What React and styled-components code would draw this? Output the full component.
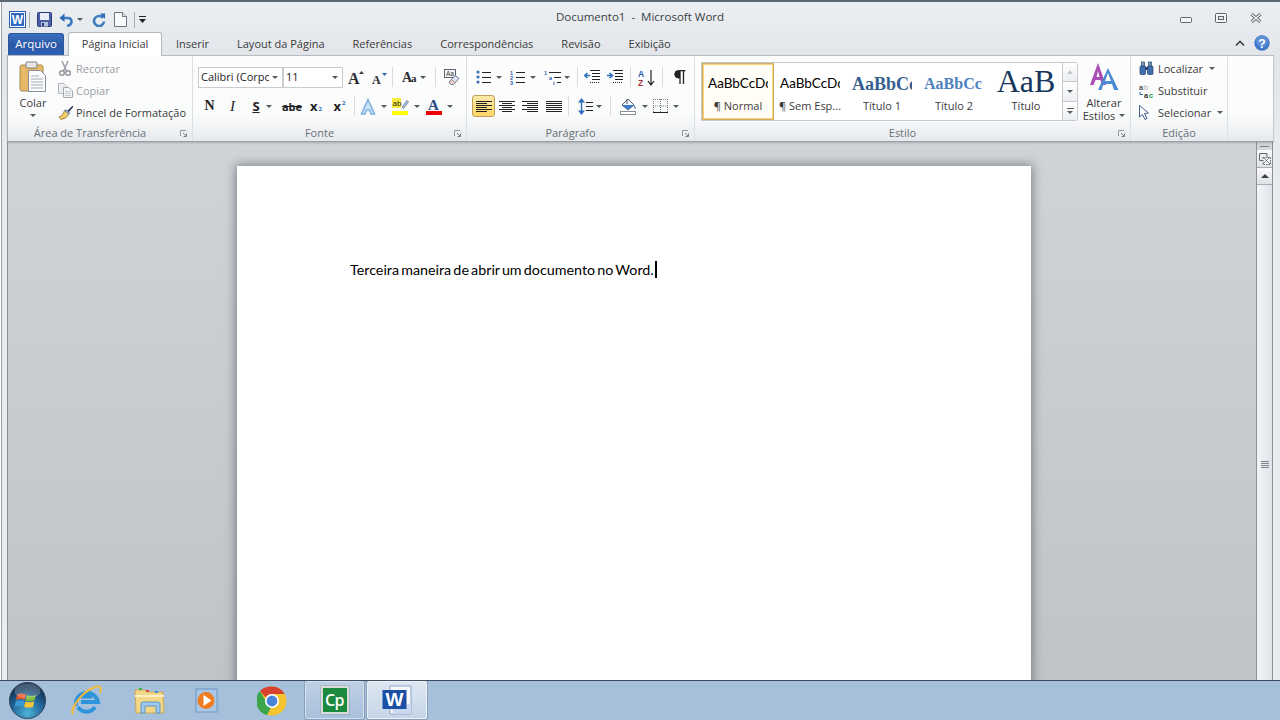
import React from "react";
import styled, { createGlobalStyle } from "styled-components";

const GlobalStyle = createGlobalStyle`
  html, body { margin: 0; padding: 0; height: 100%; overflow: hidden; }
  body { font-family: "Open Sans", "Liberation Sans", sans-serif; font-size: 11px; color: #3b3b3b; }
  #root { height: 720px; }
  svg { display: block; flex: none; }
`;

const Screen = styled.div`
  width: 1280px;
  height: 720px;
  display: flex;
  flex-direction: column;
  overflow: hidden;
  background: #a6bfdb;
`;

const Window = styled.div`
  height: 681px;
  display: flex;
  flex-direction: column;
  flex: none;
  background: linear-gradient(to bottom, #eceff2 0, #e2e5e9 56px, #e8eaed 142px, #eaecef 100%);
  border-top: 2px solid #5d6975;
  border-bottom: 1px solid #3f4c60;
  box-sizing: border-box;
  padding: 0 7px 0 7px;
  box-shadow: inset 1px 0 0 #fff, inset 2px 0 0 #9aa0a6;
`;

const TitleBar = styled.div`
  height: 30px;
  display: grid;
  grid-template-columns: 1fr auto 1fr;
  align-items: center;
`;

const Quick = styled.div`
  display: flex;
  align-items: center;
  padding: 5px 0 0 2px;
`;

const QuickSlot = styled.div`
  width: ${(p) => p.$w}px;
  display: flex;
  flex: none;
  align-items: center;
  justify-content: center;
  gap: 4px;
`;

const QuickRule = styled.div`
  width: 1px;
  height: 16px;
  flex: none;
  background: #a9adb3;
  margin: 0 ${(p) => p.$right}px 0 ${(p) => p.$left}px;
`;

const Title = styled.div`
  font-size: 11.5px;
  color: #3c3f44;
  padding-bottom: 2px;
`;

const Controls = styled.div`
  display: flex;
  align-items: flex-end;
  justify-content: flex-end;
  padding: 2px 11px 0 0;
  gap: 23px;
`;

const TabBar = styled.div`
  height: 23px;
  display: flex;
  align-items: flex-end;
`;

const FileTab = styled.div`
  width: 56px;
  height: 22px;
  margin: 0 0 0 1px;
  padding-bottom: 2px;
  display: flex;
  align-items: center;
  justify-content: center;
  color: #fff;
  background: linear-gradient(to bottom, #3c6fbd, #2a57a8 55%, #2f60b4);
  border: 1px solid #2b579a;
  border-bottom: 0;
  border-radius: 3px 3px 0 0;
  box-sizing: border-box;
  font-size: 11.5px;
`;

const ActiveTab = styled.div`
  width: 94px;
  height: 24px;
  margin: 0 0 -1px 4px;
  padding-bottom: 2px;
  display: flex;
  align-items: center;
  justify-content: center;
  background: #fff;
  border: 1px solid #b5b8bd;
  border-bottom: 0;
  border-radius: 3px 3px 0 0;
  box-sizing: border-box;
  position: relative;
  z-index: 1;
`;

const Tab = styled.div`
  height: 22px;
  display: flex;
  align-items: center;
  box-sizing: border-box;
  padding: 0 14px 2px;
  white-space: nowrap;
  &:first-of-type { margin-left: 1px; }
`;

const TabSpacer = styled.div`
  flex: 1;
`;

const TabEnd = styled.div`
  height: 22px;
  display: flex;
  align-items: center;
  gap: 9px;
  margin-right: 3px;
  padding-bottom: 2px;
  box-sizing: border-box;
`;

const Ribbon = styled.div`
  height: 87px;
  flex: none;
  display: flex;
  box-sizing: border-box;
  border-top: 1px solid #b7babf;
  border-bottom: 1px solid #9a9ea5;
  border-left: 1px solid #a9adb3;
  border-right: 1px solid #c4c7cc;
  margin-right: -1px;
  background: linear-gradient(to bottom, #fdfdfe 0, #fafbfb 60px, #e6e9ed 85px);
  box-shadow: 0 2px 2px -1px rgba(80, 85, 95, 0.3);
  position: relative;
`;

const Group = styled.div`
  width: ${(p) => p.$w}px;
  flex: none;
  display: flex;
  flex-direction: column;
  border-right: 1px solid #dcdfe3;
  box-sizing: border-box;
`;

const GroupBody = styled.div`
  height: 69px;
  display: flex;
  flex-direction: ${(p) => (p.$column ? "column" : "row")};
  padding: ${(p) => p.$pad || "0"};
  box-sizing: border-box;
`;

const GroupFoot = styled.div`
  height: 16px;
  display: flex;
  align-items: center;
`;

const GroupLabel = styled.div`
  flex: 1;
  text-align: center;
  color: #697078;
  white-space: nowrap;
  padding-bottom: 2px;
`;

const Launcher = styled.div`
  width: 20px;
  display: flex;
  justify-content: flex-end;
  padding-right: 5px;
  box-sizing: border-box;
`;

const BigButton = styled.div`
  width: ${(p) => p.$w}px;
  display: flex;
  flex-direction: column;
  align-items: center;
  flex: none;
  line-height: 13px;
`;

const BigIcon = styled.div`
  height: 40px;
  padding-top: ${(p) => p.$top || 5}px;
  box-sizing: border-box;
`;

const BigCaretLine = styled.div`
  height: 13px;
  display: flex;
  align-items: center;
  gap: 4px;
`;

const SideList = styled.div`
  display: flex;
  flex-direction: column;
  padding: 1px 0 0 ${(p) => p.$left || 0}px;
`;

const SideRow = styled.div`
  height: 22px;
  display: flex;
  align-items: center;
  white-space: nowrap;
  color: ${(p) => (p.$off ? "#9b9ea2" : "#3b3b3b")};
`;

const SideIcon = styled.div`
  width: ${(p) => p.$w}px;
  display: flex;
  justify-content: flex-start;
`;

const Caret = styled.span`
  display: inline-block;
  flex: none;
  width: 0;
  height: 0;
  border-left: 3px solid transparent;
  border-right: 3px solid transparent;
  border-top: 3px solid #555a60;
  margin-left: ${(p) => p.$m || 0}px;
`;

const ToolRow = styled.div`
  height: 22px;
  display: flex;
  align-items: center;
  margin-bottom: 7px;
`;

const Tool = styled.div`
  width: ${(p) => p.$w}px;
  height: 22px;
  flex: none;
  display: flex;
  align-items: center;
  justify-content: center;
  gap: ${(p) => p.$gap ?? 5}px;
  box-sizing: border-box;
  ${(p) =>
    p.$on &&
    `
    background: linear-gradient(to bottom, #fde9a8, #fcd666);
    border: 1px solid #c2a05a;
    border-radius: 3px;
  `}
`;

const Rule = styled.div`
  width: 1px;
  height: 20px;
  flex: none;
  background: #d9dbdf;
  margin: 0 ${(p) => p.$m}px;
`;

const Combo = styled.div`
  width: ${(p) => p.$w}px;
  height: 21px;
  flex: none;
  display: flex;
  align-items: center;
  justify-content: space-between;
  background: #fff;
  border: 1px solid #c8cbd0;
  box-sizing: border-box;
  padding: 0 4px 0 2px;
  color: #222;
  white-space: nowrap;
  overflow: hidden;
`;

const ComboText = styled.span`
  display: block;
  overflow: hidden;
  width: ${(p) => p.$w}px;
  margin-bottom: 2px;
`;

const FormatLetter = styled.span`
  font-family: ${(p) => (p.$serif ? '"Liberation Serif", serif' : '"Open Sans", sans-serif')};
  font-size: ${(p) => p.$size || 13}px;
  font-weight: ${(p) => (p.$plain ? 400 : 700)};
  font-style: ${(p) => (p.$italic ? "italic" : "normal")};
  text-decoration: ${(p) => p.$line || "none"};
  color: #222;
  line-height: 1;
`;

const Script = styled.span`
  font-size: 6px;
  font-weight: 700;
  color: ${(p) => p.$color};
  line-height: 1;
  align-self: ${(p) => (p.$up ? "flex-start" : "flex-end")};
  margin: ${(p) => (p.$up ? "5px 0 0 1px" : "0 0 5px 1px")};
`;

const Gallery = styled.div`
  width: 362px;
  height: 59px;
  margin-top: 6px;
  display: flex;
  flex: none;
  background: #fff;
  border: 1px solid #c6c9ce;
  box-sizing: border-box;
`;

const StyleCard = styled.div`
  width: 72px;
  flex: none;
  display: flex;
  flex-direction: column;
  align-items: center;
  box-sizing: border-box;
  overflow: hidden;
  ${(p) =>
    p.$on &&
    `
    border: 2px solid #f6d678;
    outline: 1px solid #d5ae62;
    outline-offset: -1px;
    background: #fffdf6;
  `}
`;

const StylePreview = styled.div`
  height: 36px;
  width: 60px;
  margin-top: ${(p) => (p.$on ? -2 : 0)}px;
  display: flex;
  align-items: ${(p) => (p.$title ? "flex-start" : "center")};
  justify-content: ${(p) => (p.$title ? "center" : "flex-start")};
  overflow: hidden;
  white-space: nowrap;
  font-family: ${(p) => (p.$serif ? '"Liberation Serif", serif' : 'Lato, "Liberation Sans", sans-serif')};
  font-size: ${(p) => p.$size}px;
  font-weight: ${(p) => (p.$bold ? 700 : 400)};
  color: ${(p) => p.$color || "#000"};
  line-height: 1;
  padding-top: ${(p) => (p.$title ? 2 : 6)}px;
  box-sizing: border-box;
`;

const StyleName = styled.div`
  white-space: nowrap;
  line-height: 14px;
`;

const GalleryScroll = styled.div`
  width: 15px;
  height: 59px;
  margin: 6px 0 0 0;
  display: flex;
  flex-direction: column;
  flex: none;
  box-sizing: border-box;
  border: 1px solid #c6c9ce;
  border-left: 0;
  border-radius: 0 3px 3px 0;
`;

const GalleryBtn = styled.div`
  flex: 1;
  display: flex;
  flex-direction: column;
  align-items: center;
  justify-content: center;
  gap: 2px;
  background: linear-gradient(to bottom, #fff, #eceef1);
  & + & { border-top: 1px solid #c6c9ce; }
`;

const GalleryUp = styled.span`
  width: 0;
  height: 0;
  border-left: 3.5px solid transparent;
  border-right: 3.5px solid transparent;
  border-bottom: 4px solid #c4c7cb;
`;

const GalleryBar = styled.span`
  width: 7px;
  height: 1px;
  background: #555a60;
`;

const Workspace = styled.div`
  flex: 1;
  min-height: 0;
  display: flex;
  overflow: hidden;
`;

const Canvas = styled.div`
  flex: 1;
  min-width: 0;
  padding: 24px 0 0 230px;
  background: linear-gradient(to bottom, #d0d3d7, #c0c3c7);
  box-shadow: inset 1px 0 0 #8c9096;
  overflow: hidden;
`;

const Page = styled.div`
  width: 794px;
  height: 900px;
  padding: 94px 0 0 113px;
  box-sizing: border-box;
  background: #fff;
  box-shadow: 0 0 10px 1px rgba(50, 52, 58, 0.55);
`;

const Line = styled.div`
  display: flex;
  align-items: center;
  height: 18px;
  font-family: Lato, "Liberation Sans", sans-serif;
  font-size: 14.3px;
  word-spacing: -1.5px;
  color: #000;
  white-space: pre;
`;

const Cursor = styled.span`
  width: 2px;
  height: 17px;
  background: #000;
  margin-left: 1px;
`;

const Scroller = styled.div`
  width: 17px;
  flex: none;
  display: flex;
  flex-direction: column;
  box-sizing: border-box;
  border-left: 1px solid #8e9298;
  border-right: 1px solid #8e9298;
  background: #eceef1;
`;

const Splitter = styled.div`
  height: 8px;
  flex: none;
  display: flex;
  justify-content: center;
  padding-top: 4px;
  box-sizing: border-box;
  background: #d2d5d9;
`;

const SplitMark = styled.div`
  width: 9px;
  height: 1px;
  background: #7f8389;
`;

const ScrollBtn = styled.div`
  height: ${(p) => p.$h}px;
  flex: none;
  display: flex;
  align-items: center;
  justify-content: center;
  background: linear-gradient(to bottom, #fbfbfc, #dfe2e6);
  border-bottom: 1px solid #a9adb3;
  box-sizing: border-box;
`;

const UpArrow = styled.span`
  width: 0;
  height: 0;
  border-left: 4px solid transparent;
  border-right: 4px solid transparent;
  border-bottom: 4px solid #3c4046;
`;

const Thumb = styled.div`
  flex: 1;
  display: flex;
  flex-direction: column;
  align-items: center;
  justify-content: flex-start;
  gap: 1px;
  padding-top: 276px;
  box-sizing: border-box;
  background: linear-gradient(to right, #f4f5f8, #dfe2e8);
`;

const Grip = styled.span`
  width: 8px;
  height: 1px;
  background: #80848a;
`;

const Taskbar = styled.div`
  height: 39px;
  flex: none;
  display: flex;
  align-items: stretch;
  background: #a6bfdb;
`;

const Launch = styled.div`
  width: ${(p) => p.$w}px;
  flex: none;
  display: flex;
  align-items: center;
  justify-content: center;
`;

const TaskButton = styled.div`
  width: ${(p) => p.$w}px;
  margin-left: ${(p) => p.$m}px;
  flex: none;
  display: flex;
  align-items: center;
  justify-content: center;
  box-sizing: border-box;
  border: 1px solid ${(p) => (p.$lit ? "#eef3f8" : "#d4e0ec")};
  border-radius: 2px;
  box-shadow: 0 0 0 1px rgba(70, 90, 120, 0.3);
  margin-bottom: 1px;
  background: ${(p) =>
    p.$lit
      ? "linear-gradient(to bottom, #dde7f1, #c6d6e7)"
      : "linear-gradient(to bottom, #bfd0e4, #a9c1dc)"};
`;

const CpTile = styled.div`
  width: 28px;
  height: 28px;
  display: flex;
  align-items: center;
  justify-content: center;
  background: #1b8a3c;
  border: 2px solid #d7dcd9;
  box-shadow: 0 0 1px #555;
  box-sizing: border-box;
  font-family: "Open Sans", sans-serif;
  font-size: 16px;
  font-weight: 600;
  color: #fff;
  letter-spacing: -0.5px;
`;

/* drawings */
const WordMark = () => (
  <svg width="17" height="17" viewBox="0 0 17 17">
    <rect x="0.5" y="0.5" width="16" height="16" fill="#fff" stroke="#2a5caa" />
    <rect x="2" y="2" width="13" height="13" fill="#2f69c0" />
    <text x="8.5" y="13" textAnchor="middle" fontFamily="Liberation Sans" fontWeight="700" fontSize="12" fill="#fff">W</text>
  </svg>
);
const Save = () => (
  <svg width="15" height="15" viewBox="0 0 15 15">
    <rect x="0.5" y="0.5" width="14" height="14" rx="1" fill="#4a5fa6" stroke="#2c3c78" />
    <rect x="3" y="1" width="9" height="7" fill="#e9eef8" />
    <rect x="4" y="10" width="7" height="4.5" fill="#b7c3de" />
    <rect x="5" y="11" width="2" height="3" fill="#2c3c78" />
  </svg>
);
const Undo = () => (
  <svg width="14" height="14" viewBox="0 0 14 14">
    <path d="M3 5 H9 Q12.5 5 12.5 8.5 Q12.5 12 8 13" fill="none" stroke="#3f7cc4" strokeWidth="2.6" />
    <path d="M0.5 5 L5.5 0.5 V9 Z" fill="#2f69b5" />
  </svg>
);
const Redo = () => (
  <svg width="14" height="14" viewBox="0 0 14 14">
    <path d="M11 5 A5 5 0 1 0 12 8.5" fill="none" stroke="#3f7cc4" strokeWidth="2.6" />
    <path d="M8 0.5 L13 0.5 L13 6 Z" fill="#2f69b5" />
  </svg>
);
const NewDoc = () => (
  <svg width="13" height="15" viewBox="0 0 13 15">
    <path d="M0.5 0.5 H8.5 L12.5 4.5 V14.5 H0.5 Z" fill="#fafbfd" stroke="#6d7681" />
    <path d="M8.5 0.5 V4.5 H12.5" fill="#dfe4ea" stroke="#6d7681" />
  </svg>
);
const CustomizeMark = () => (
  <svg width="7" height="7" viewBox="0 0 7 7">
    <rect x="0" y="0" width="7" height="1" fill="#222" />
    <path d="M0 3 H7 L3.5 7 Z" fill="#222" />
  </svg>
);
const Minimize = () => (
  <svg width="12" height="6" viewBox="0 0 12 6">
    <rect x="0.5" y="0.5" width="11" height="5" rx="1" fill="#f4f5f7" stroke="#5d646c" />
  </svg>
);
const Maximize = () => (
  <svg width="12" height="10" viewBox="0 0 12 10">
    <rect x="0.5" y="0.5" width="11" height="9" rx="1" fill="#f4f5f7" stroke="#5d646c" />
    <rect x="3.5" y="3.5" width="5" height="3" fill="#e2e5e9" stroke="#5d646c" />
  </svg>
);
const CloseIcon = () => (
  <svg width="12" height="10" viewBox="0 0 12 10">
    <path d="M1.5 1 L10.5 9 M10.5 1 L1.5 9" stroke="#5d646c" strokeWidth="3.2" />
    <path d="M1.5 1 L10.5 9 M10.5 1 L1.5 9" stroke="#f4f5f7" strokeWidth="1.4" />
  </svg>
);
const ChevronUp = () => (
  <svg width="10" height="7" viewBox="0 0 10 7">
    <path d="M1 5.5 L5 1.5 L9 5.5" fill="none" stroke="#3a3f46" strokeWidth="1.6" />
  </svg>
);
const HelpIcon = () => (
  <svg width="16" height="16" viewBox="0 0 16 16">
    <circle cx="8" cy="8" r="7.7" fill="#3f78c8" />
    <circle cx="8" cy="6" r="6" fill="#6f9fe0" opacity="0.6" />
    <text x="8" y="12.5" textAnchor="middle" fontFamily="Liberation Sans" fontWeight="700" fontSize="12" fill="#fff">?</text>
  </svg>
);
const PasteIcon = () => (
  <svg width="28" height="31" viewBox="0 0 28 31">
    <rect x="1" y="4" width="23" height="26" rx="2" fill="#e7b865" stroke="#a88950" />
    <rect x="7" y="1" width="11" height="6" rx="1" fill="#e8e8e8" stroke="#7e7e7e" />
    <path d="M9.5 9.5 H21.5 L26.5 14.5 V30.5 H9.5 Z" fill="#fbfcfe" stroke="#8a9099" />
    <path d="M12 15 H20 M12 18 H24 M12 21 H24 M12 24 H24 M12 27 H24" stroke="#a5abb4" />
  </svg>
);
const Scissors = () => (
  <svg width="14" height="16" viewBox="0 0 14 16">
    <path d="M4 1 L8.5 11 M10 1 L5.5 11" stroke="#9ea2a8" strokeWidth="1.6" />
    <circle cx="4" cy="13" r="2.3" fill="#fff" stroke="#8f949a" strokeWidth="1.4" />
    <circle cx="10" cy="13" r="2.3" fill="#fff" stroke="#8f949a" strokeWidth="1.4" />
  </svg>
);
const CopyIcon = () => (
  <svg width="15" height="15" viewBox="0 0 15 15">
    <path d="M0.5 0.5 H6 L9 3.5 V10.5 H0.5 Z" fill="#eceef1" stroke="#b5b8bd" />
    <path d="M5.5 4.5 H11 L14.5 8 V14.5 H5.5 Z" fill="#f6f7f8" stroke="#a6a9ae" />
    <path d="M7 8.5 H13 M7 10.5 H13 M7 12.5 H13" stroke="#c4c7cb" />
  </svg>
);
const BrushIcon = () => (
  <svg width="16" height="15" viewBox="0 0 16 15">
    <path d="M9 6 L14.5 0.8 L15.4 1.8 L10.5 7.5 Z" fill="#2f3b55" />
    <path d="M1 12 Q5 11 6.5 5.5 L11 9 Q9 13.5 3 14.5 Z" fill="#f1cd6e" stroke="#a2813f" />
    <path d="M6.5 5.5 L8 4.5 L12 8 L11 9 Z" fill="#8aa9d6" stroke="#5d6f90" strokeWidth="0.5" />
  </svg>
);
const Launch7 = () => (
  <svg width="7" height="7" viewBox="0 0 7 7">
    <path d="M0.5 6 V0.5 H6" fill="none" stroke="#93979d" />
    <path d="M3 3 L6.5 6.5 M6.5 3.5 V6.5 H3.5" fill="none" stroke="#7b8087" />
  </svg>
);
const GrowFont = ({ shrink }) => (
  <svg width="17" height="15" viewBox="0 0 17 15">
    <text x={shrink ? 1 : 0} y="14" fontFamily="Liberation Serif" fontWeight="700" fontSize={shrink ? 12 : 16} fill="#2a2d31">A</text>
    <path d={shrink ? "M11 3 H16 L13.5 6 Z" : "M11 4 H16 L13.5 1 Z"} fill={shrink ? "#2a63ad" : "#3a3f46"} />
  </svg>
);
const ChangeCase = () => (
  <svg width="16" height="12" viewBox="0 0 16 12">
    <text x="0" y="11" fontFamily="Liberation Serif" fontWeight="700" fontSize="14" fill="#2a2d31">A</text>
    <text x="9" y="11" fontFamily="Liberation Serif" fontWeight="700" fontSize="11" fill="#2a2d31">a</text>
  </svg>
);
const ClearFormat = () => (
  <svg width="16" height="16" viewBox="0 0 16 16">
    <rect x="0.5" y="0.5" width="11" height="8" fill="#f7f7f8" stroke="#5f646b" />
    <text x="2" y="7" fontFamily="Liberation Sans" fontSize="6.5" fill="#333">Aa</text>
    <path d="M5 13 L11 6.5 L15 9.5 L9.5 15.5 H7 Z" fill="#dfe6f2" stroke="#68778f" />
    <path d="M5 13 L7.5 10.5 L11.5 13.5 L9.5 15.5 H7 Z" fill="#f3c9c9" stroke="#68778f" strokeWidth="0.6" />
  </svg>
);
const TextEffects = () => (
  <svg width="16" height="17" viewBox="0 0 16 17">
    <path d="M8 1.5 L14.5 16 H11 L9.5 12 H6.5 L5 16 H1.5 Z" fill="#cfe3f7" stroke="#7fb2e5" strokeWidth="1.6" />
  </svg>
);
const Highlighter = () => (
  <svg width="17" height="17" viewBox="0 0 17 17">
    <rect x="0" y="0" width="9" height="10" fill="#f7ee3c" />
    <text x="0.5" y="8" fontFamily="Liberation Sans" fontSize="8" fill="#222">ab</text>
    <path d="M10 9 L15 2.5 L16.5 4 L11.5 10.5 Z" fill="#b9c8dd" stroke="#5e7190" strokeWidth="0.8" />
    <rect x="0" y="13" width="16" height="4" fill="#ffff00" />
  </svg>
);
const FontColor = () => (
  <svg width="16" height="17" viewBox="0 0 16 17">
    <text x="2" y="12" fontFamily="Liberation Serif" fontWeight="700" fontSize="15" fill="#2b4d83">A</text>
    <rect x="0" y="13" width="16" height="4" fill="#f00000" />
  </svg>
);
const lineRows = (rows) => rows.map(([x1, x2, y], i) => <path key={i} d={`M${x1} ${y}.5 H${x2}`} stroke="#222" />);
const Bullets = () => (
  <svg width="15" height="14" viewBox="0 0 15 14">
    {[2, 7, 12].map((y) => <circle key={y} cx="2" cy={y} r="1.6" fill="#3a6fb5" />)}
    {lineRows([[6, 15, 2], [6, 15, 7], [6, 15, 12]])}
  </svg>
);
const Numbers = () => (
  <svg width="15" height="15" viewBox="0 0 15 15">
    {[5, 10, 15].map((y, i) => <text key={y} x="0" y={y} fontFamily="Liberation Sans" fontWeight="700" fontSize="5.5" fill="#2b5ea8">{i + 1}</text>)}
    {lineRows([[6, 15, 2], [6, 15, 7], [6, 15, 12]])}
  </svg>
);
const MultiLevel = () => (
  <svg width="17" height="15" viewBox="0 0 17 15">
    <text x="0" y="5" fontFamily="Liberation Sans" fontWeight="700" fontSize="5.5" fill="#2b5ea8">1</text>
    <text x="5" y="10" fontFamily="Liberation Sans" fontWeight="700" fontSize="5.5" fill="#2b5ea8">a</text>
    <text x="9" y="15" fontFamily="Liberation Sans" fontWeight="700" fontSize="5.5" fill="#2b5ea8">i</text>
    {lineRows([[5, 17, 2], [10, 17, 7], [13, 17, 12]])}
  </svg>
);
const IndentIcon = ({ more }) => (
  <svg width="16" height="15" viewBox="0 0 16 15">
    <path d="M6 0.5 H16 M8 3.5 H16 M8 6.5 H16 M8 9.5 H16" stroke="#222" />
    <path d="M6 12.5 H16" stroke="#222" strokeDasharray="1 1" />
    {more ? (
      <path d="M0 5.5 H4 M2.5 3 L5.5 5.5 L2.5 8" fill="none" stroke="#2b6cb8" strokeWidth="1.6" />
    ) : (
      <path d="M6 5.5 H2 M3.5 3 L0.5 5.5 L3.5 8" fill="none" stroke="#2b6cb8" strokeWidth="1.6" />
    )}
  </svg>
);
const SortIcon = () => (
  <svg width="17" height="17" viewBox="0 0 17 17">
    <text x="0" y="8" fontFamily="Liberation Sans" fontWeight="700" fontSize="8.5" fill="#2b5ea8">A</text>
    <text x="0" y="17" fontFamily="Liberation Sans" fontWeight="700" fontSize="8.5" fill="#a33a3a">Z</text>
    <path d="M13 1 V15 M10 12 L13 16 L16 12" fill="none" stroke="#222" strokeWidth="1.2" />
  </svg>
);
const Pilcrow = () => (
  <svg width="13" height="14" viewBox="0 0 13 14">
    <path d="M5.5 0.5 A3.6 3.6 0 0 0 5.5 8 H6.5 V0.5 Z" fill="#222" stroke="#222" />
    <path d="M7 0.5 H12.5 M7 0.5 V14 M10.5 0.5 V14" fill="none" stroke="#222" strokeWidth="1.3" />
  </svg>
);
const AlignIcon = ({ mode }) => {
  const short = { left: [0, 11], center: [3, 13], right: [5, 16], justify: [0, 16] }[mode];
  const long = [0, 16];
  return (
    <svg width="16" height="13" viewBox="0 0 16 13">
      {lineRows([
        [long[0], long[1], 1], [short[0], short[1], 3], [long[0], long[1], 5],
        [short[0], short[1], 7], [long[0], long[1], 9], [short[0], short[1], 11],
      ])}
    </svg>
  );
};
const LineSpacing = () => (
  <svg width="15" height="17" viewBox="0 0 15 17">
    <path d="M3.5 2 V15" stroke="#2b6cb8" strokeWidth="1.4" />
    <path d="M3.5 0 L7 4.5 H0 Z M3.5 17 L7 12.5 H0 Z" fill="#2b6cb8" />
    {lineRows([[8, 15, 4], [8, 15, 8], [8, 15, 12]])}
  </svg>
);
const Bucket = () => (
  <svg width="17" height="17" viewBox="0 0 17 17">
    <path d="M8 1 L14 7 L8 12 L2 7 Z" fill="#f4f6f9" stroke="#596069" />
    <path d="M7 1 V6" stroke="#596069" />
    <path d="M14 7 Q16.5 9.5 15.5 11 Q14 10 14 7 Z" fill="#2b6cb8" />
    <path d="M2 7 L14 7 L8 12 Z" fill="#3f7cc4" />
    <rect x="0.5" y="13.5" width="15" height="3" fill="#fff" stroke="#878c93" />
  </svg>
);
const BorderIcon = () => (
  <svg width="15" height="14" viewBox="0 0 15 14">
    <path d="M0.5 0 V14 M7.5 0 V14 M14.5 0 V14 M0 0.5 H15 M0 7 H15" stroke="#7a7e84" strokeDasharray="1 1" />
    <path d="M0 13.5 H15" stroke="#222" />
  </svg>
);
const AlterStyles = () => (
  <svg width="30" height="28" viewBox="0 0 30 28">
    <path d="M9 1 L17 23 H13 L11.4 18 H6.5 L4.5 23 H1 Z M7.5 15 H10.5 L9 9 Z" fill="#a84fb3" />
    <path d="M19 6 L29.5 28 H25 L23 22 H14.5 L12.5 28 H9 Z M16 19 H22 L19 11 Z" fill="#4d8ad4" />
  </svg>
);
const Binoculars = () => (
  <svg width="15" height="14" viewBox="0 0 15 14">
    <rect x="1" y="5" width="5.5" height="8.5" rx="1" fill="#3f6fae" stroke="#24446f" strokeWidth="0.7" />
    <rect x="8.5" y="5" width="5.5" height="8.5" rx="1" fill="#3f6fae" stroke="#24446f" strokeWidth="0.7" />
    <rect x="2.5" y="1" width="3" height="4" fill="#7a97bd" stroke="#24446f" strokeWidth="0.7" />
    <rect x="9.5" y="1" width="3" height="4" fill="#7a97bd" stroke="#24446f" strokeWidth="0.7" />
    <rect x="6" y="6" width="3" height="3" fill="#24446f" />
  </svg>
);
const ReplaceIcon = () => (
  <svg width="16" height="15" viewBox="0 0 16 15">
    <text x="0" y="7" fontFamily="Liberation Sans" fontWeight="700" fontSize="7.5" fill="#555">a</text>
    <text x="5" y="7" fontFamily="Liberation Sans" fontSize="7.5" fill="#aaa">b</text>
    <path d="M1 9 V11.5 H4" fill="none" stroke="#2b6cb8" />
    <text x="5" y="14.5" fontFamily="Liberation Sans" fontWeight="700" fontSize="7.5" fill="#333">a</text>
    <text x="10" y="14.5" fontFamily="Liberation Sans" fontWeight="700" fontSize="7.5" fill="#1f9a3c">c</text>
  </svg>
);
const Pointer = () => (
  <svg width="11" height="15" viewBox="0 0 11 15">
    <path d="M0.5 0.5 V12 L3.5 9.5 L6 14.5 L8 13.5 L5.5 8.5 L9.5 8 Z" fill="#fff" stroke="#44608a" />
  </svg>
);
const RulerToggle = () => (
  <svg width="12" height="12" viewBox="0 0 12 12">
    <path d="M0.5 0.5 H8 V5 M0.5 0.5 V7.5 H5" fill="#e8eaed" stroke="#666a70" />
    <path d="M4 4.5 H11.5 V11.5 H4 Z" fill="#f4f5f7" stroke="#666a70" strokeDasharray="1.5 1" />
    <path d="M4 4 L11 11 M11 4 L4 11" stroke="#555a60" strokeWidth="0.7" />
  </svg>
);
const Orb = () => (
  <svg width="37" height="37" viewBox="0 0 37 37">
    <defs>
      <radialGradient id="orb" cx="50%" cy="85%" r="75%">
        <stop offset="0" stopColor="#4fb4d8" />
        <stop offset="0.55" stopColor="#21689c" />
        <stop offset="1" stopColor="#10304f" />
      </radialGradient>
    </defs>
    <circle cx="18.5" cy="18.5" r="18" fill="url(#orb)" stroke="#33465c" />
    <path d="M8 13 Q12 10.5 17 12.5 L15.5 18 Q11 16 7 18 Z" fill="#e8552c" />
    <path d="M18 13 Q22 15 27 13 L25.5 18.5 Q21 20 16.5 18.5 Z" fill="#7eb93a" />
    <path d="M7 19 Q11 17.5 15.3 19 L14 24.5 Q9.5 23 5.5 25 Z" fill="#3a9ad8" />
    <path d="M16.3 19.5 Q21 21 25.3 19.5 L24 25 Q19.5 26.5 15 24.8 Z" fill="#f3c33a" />
    <ellipse cx="18.5" cy="9" rx="13" ry="7.5" fill="#fff" opacity="0.22" />
  </svg>
);
const IeIcon = () => (
  <svg width="32" height="32" viewBox="0 0 32 32">
    <path d="M5 21 A11 11 0 1 1 27 17 H10 M10 11.5 H21" fill="none" stroke="#2d94dc" strokeWidth="4" />
    <path d="M24 22 A10 10 0 0 1 7 22" fill="none" stroke="#2d94dc" strokeWidth="4" />
    <path d="M2 29 C-1 26 8 8 24 2 C29 0 31 3 29 8" fill="none" stroke="#f0bd3a" strokeWidth="2" />
  </svg>
);
const FolderIcon = () => (
  <svg width="31" height="28" viewBox="0 0 31 28">
    <path d="M1 3 H11 L13 5 H29 L30 26 H2 Z" fill="#f2d787" stroke="#c9a95a" />
    <rect x="5" y="1" width="3" height="2" fill="#38b54a" />
    <rect x="12" y="3" width="3" height="2" fill="#e04a3a" />
    <rect x="21" y="4" width="3" height="2" fill="#3a8fd8" />
    <path d="M1 9 H30" stroke="#fbf0c4" strokeWidth="2" />
    <path d="M7 26 V17 Q7 15 9 15 H24 Q26 15 26 17 V26 H22 V19 H11 V26 Z" fill="#9cc6ea" stroke="#5f97c8" />
  </svg>
);
const MediaIcon = () => (
  <svg width="28" height="26" viewBox="0 0 28 26">
    <rect x="1" y="1" width="21" height="23" fill="#a9c8e8" stroke="#6b94c0" />
    <path d="M23 3 V24 H4" fill="none" stroke="#8db0d3" />
    <circle cx="11" cy="12.5" r="8.5" fill="#ee7d22" />
    <path d="M8.5 7 L16.5 12.5 L8.5 18 Z" fill="#fff" />
  </svg>
);
const ChromeIcon = () => (
  <svg width="30" height="30" viewBox="0 0 30 30">
    <circle cx="15" cy="15" r="14.5" fill="#f4c430" />
    <path d="M15 0.5 A14.5 14.5 0 0 1 27.6 8 H15 A7 7 0 0 0 8.8 11.5 L3 5 A14.5 14.5 0 0 1 15 0.5 Z" fill="#d9412f" />
    <path d="M3 5 L9 15.5 A6.5 6.5 0 0 0 14 21.5 L10 29 A14.5 14.5 0 0 1 3 5 Z" fill="#3aa54a" />
    <circle cx="15" cy="15" r="7" fill="#fff" />
    <circle cx="15" cy="15" r="5.4" fill="#4a84d8" />
  </svg>
);
const WordTask = () => (
  <svg width="30" height="31" viewBox="0 0 30 31">
    <path d="M8 1 H29 V29 H8 Z" fill="#f6f8fc" stroke="#8ea3c4" />
    <path d="M10 24 L29 18 V29 H12 Z" fill="#c8d8ee" />
    <rect x="0.5" y="5" width="24" height="19" fill="#1c4fa3" />
    <text x="12.5" y="21" textAnchor="middle" fontFamily="Liberation Sans" fontWeight="700" fontSize="19" fill="#fff">W</text>
  </svg>
);

const App = () => (
  <Screen>
    <GlobalStyle />
    <Window>
      <TitleBar>
        <Quick>
          <WordMark />
          <QuickRule $left={3} $right={3} />
          <QuickSlot $w={22}><Save /></QuickSlot>
          <QuickSlot $w={31}><Undo /><Caret /></QuickSlot>
          <QuickSlot $w={25}><Redo /></QuickSlot>
          <QuickSlot $w={18}><NewDoc /></QuickSlot>
          <QuickRule $left={5} $right={3} />
          <QuickSlot $w={9}><CustomizeMark /></QuickSlot>
        </Quick>
        <Title>Documento1&nbsp; -&nbsp; Microsoft Word</Title>
        <Controls>
          <Minimize />
          <Maximize />
          <CloseIcon />
        </Controls>
      </TitleBar>
      <TabBar>
        <FileTab>Arquivo</FileTab>
        <ActiveTab>Página Inicial</ActiveTab>
        <Tab>Inserir</Tab>
        <Tab>Layout da Página</Tab>
        <Tab>Referências</Tab>
        <Tab>Correspondências</Tab>
        <Tab>Revisão</Tab>
        <Tab>Exibição</Tab>
        <TabSpacer />
        <TabEnd>
          <ChevronUp />
          <HelpIcon />
        </TabEnd>
      </TabBar>
      <Ribbon>
        <Group $w={185}>
          <GroupBody $pad="0 0 0 7px">
            <BigButton $w={36}>
              <BigIcon><PasteIcon /></BigIcon>
              <div>Colar</div>
              <BigCaretLine><Caret /></BigCaretLine>
            </BigButton>
            <SideList $left={7}>
              <SideRow $off><SideIcon $w={18}><Scissors /></SideIcon>Recortar</SideRow>
              <SideRow $off><SideIcon $w={18}><CopyIcon /></SideIcon>Copiar</SideRow>
              <SideRow><SideIcon $w={18}><BrushIcon /></SideIcon>Pincel de Formatação</SideRow>
            </SideList>
          </GroupBody>
          <GroupFoot>
            <GroupLabel>Área de Transferência</GroupLabel>
            <Launcher><Launch7 /></Launcher>
          </GroupFoot>
        </Group>

        <Group $w={274}>
          <GroupBody $column $pad="10px 0 0 5px">
            <ToolRow>
              <Combo $w={85}><ComboText $w={68}>Calibri (Corpo)</ComboText><Caret /></Combo>
              <Combo $w={60}><ComboText $w={20}>11</ComboText><Caret /></Combo>
              <Tool $w={26}><GrowFont /></Tool>
              <Tool $w={20}><GrowFont shrink /></Tool>
              <Rule $m={3} />
              <Tool $w={35} $gap={2}><ChangeCase /><Caret /></Tool>
              <Rule $m={4} />
              <Tool $w={23}><ClearFormat /></Tool>
            </ToolRow>
            <ToolRow>
              <Tool $w={23}><FormatLetter $serif $size={14}>N</FormatLetter></Tool>
              <Tool $w={23}><FormatLetter $serif $italic $plain $size={15}>I</FormatLetter></Tool>
              <Tool $w={36} $gap={6}><FormatLetter $size={13} $line="underline">S</FormatLetter><Caret /></Tool>
              <Tool $w={24}><FormatLetter $size={11} $line="line-through">abe</FormatLetter></Tool>
              <Tool $w={24} $gap={0}><FormatLetter $size={13}>x</FormatLetter><Script $color="#2b6cb8">2</Script></Tool>
              <Tool $w={23} $gap={0}><FormatLetter $size={13}>x</FormatLetter><Script $up $color="#2b6cb8">2</Script></Tool>
              <Rule $m={3} />
              <Tool $w={30}><TextEffects /><Caret /></Tool>
              <Tool $w={35}><Highlighter /><Caret /></Tool>
              <Tool $w={33}><FontColor /><Caret /></Tool>
            </ToolRow>
          </GroupBody>
          <GroupFoot>
            <GroupLabel>Fonte</GroupLabel>
            <Launcher><Launch7 /></Launcher>
          </GroupFoot>
        </Group>

        <Group $w={228}>
          <GroupBody $column $pad="10px 0 0 5px">
            <ToolRow>
              <Tool $w={34}><Bullets /><Caret /></Tool>
              <Tool $w={33}><Numbers /><Caret /></Tool>
              <Tool $w={35} $gap={3}><MultiLevel /><Caret /></Tool>
              <Rule $m={3} />
              <Tool $w={22}><IndentIcon /></Tool>
              <Tool $w={24}><IndentIcon more /></Tool>
              <Rule $m={3} />
              <Tool $w={25}><SortIcon /></Tool>
              <Rule $m={3} />
              <Tool $w={26}><Pilcrow /></Tool>
            </ToolRow>
            <ToolRow>
              <Tool $w={23} $on><AlignIcon mode="left" /></Tool>
              <Tool $w={23}><AlignIcon mode="center" /></Tool>
              <Tool $w={24}><AlignIcon mode="right" /></Tool>
              <Tool $w={23}><AlignIcon mode="justify" /></Tool>
              <Rule $m={3} />
              <Tool $w={35} $gap={3}><LineSpacing /><Caret /></Tool>
              <Rule $m={3} />
              <Tool $w={40}><Bucket /><Caret /></Tool>
              <Tool $w={24}><BorderIcon /><Caret /></Tool>
            </ToolRow>
          </GroupBody>
          <GroupFoot>
            <GroupLabel>Parágrafo</GroupLabel>
            <Launcher><Launch7 /></Launcher>
          </GroupFoot>
        </Group>

        <Group $w={436}>
          <GroupBody $pad="0 0 0 6px">
            <Gallery>
              <StyleCard $on>
                <StylePreview $on $size={13.5}>AaBbCcDc</StylePreview>
                <StyleName>¶ Normal</StyleName>
              </StyleCard>
              <StyleCard>
                <StylePreview $size={13.5}>AaBbCcDc</StylePreview>
                <StyleName>¶ Sem Esp...</StyleName>
              </StyleCard>
              <StyleCard>
                <StylePreview $serif $bold $size={18} $color="#365f91">AaBbCc</StylePreview>
                <StyleName>Título 1</StyleName>
              </StyleCard>
              <StyleCard>
                <StylePreview $serif $bold $size={16} $color="#4f81bd">AaBbCc</StylePreview>
                <StyleName>Título 2</StyleName>
              </StyleCard>
              <StyleCard>
                <StylePreview $serif $title $size={32} $color="#17365d">AaB</StylePreview>
                <StyleName>Título</StyleName>
              </StyleCard>
            </Gallery>
            <GalleryScroll>
              <GalleryBtn><GalleryUp /></GalleryBtn>
              <GalleryBtn><Caret /></GalleryBtn>
              <GalleryBtn><GalleryBar /><Caret /></GalleryBtn>
            </GalleryScroll>
            <BigButton $w={52}>
              <BigIcon $top={6}><AlterStyles /></BigIcon>
              <div>Alterar</div>
              <BigCaretLine>Estilos<Caret /></BigCaretLine>
            </BigButton>
          </GroupBody>
          <GroupFoot>
            <GroupLabel>Estilo</GroupLabel>
            <Launcher><Launch7 /></Launcher>
          </GroupFoot>
        </Group>

        <Group $w={97}>
          <GroupBody $pad="0 0 0 8px">
            <SideList>
              <SideRow><SideIcon $w={19}><Binoculars /></SideIcon>Localizar<Caret $m={6} /></SideRow>
              <SideRow><SideIcon $w={19}><ReplaceIcon /></SideIcon>Substituir</SideRow>
              <SideRow><SideIcon $w={19}><Pointer /></SideIcon>Selecionar<Caret $m={6} /></SideRow>
            </SideList>
          </GroupBody>
          <GroupFoot>
            <GroupLabel>Edição</GroupLabel>
          </GroupFoot>
        </Group>
      </Ribbon>
      <Workspace>
        <Canvas>
          <Page>
            <Line>Terceira maneira de abrir um documento no Word.<Cursor /></Line>
          </Page>
        </Canvas>
        <Scroller>
          <Splitter><SplitMark /></Splitter>
          <ScrollBtn $h={18}><RulerToggle /></ScrollBtn>
          <ScrollBtn $h={17}><UpArrow /></ScrollBtn>
          <Thumb><Grip /><Grip /><Grip /><Grip /></Thumb>
        </Scroller>
      </Workspace>
    </Window>
    <Taskbar>
      <Launch $w={55}><Orb /></Launch>
      <Launch $w={64}><IeIcon /></Launch>
      <Launch $w={60}><FolderIcon /></Launch>
      <Launch $w={60}><MediaIcon /></Launch>
      <Launch $w={66}><ChromeIcon /></Launch>
      <TaskButton $w={59} $m={0}><CpTile>Cp</CpTile></TaskButton>
      <TaskButton $w={60} $m={3} $lit><WordTask /></TaskButton>
    </Taskbar>
  </Screen>
);

export default App;
